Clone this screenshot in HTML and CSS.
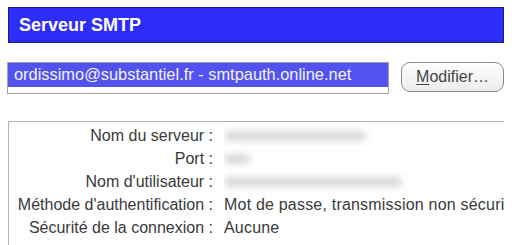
FILE: index.html
```html
<!DOCTYPE html>
<html lang="fr">
<head>
<meta charset="utf-8">
<link rel="stylesheet" href="styles.css">
</head>
<body>
<div class="page">
  <div class="header">Serveur SMTP</div>
  <div class="account-row">
    <div class="listbox">
      <div class="item selected">ordissimo@substantiel.fr - smtpauth.online.net</div>
    </div>
    <button class="btn"><u>M</u>odifier…</button>
  </div>
  <div class="details">
    <div class="grid">
      <div class="label">Nom du serveur :</div>
      <div class="value"><span class="blur b1"></span></div>
      <div class="label">Port :</div>
      <div class="value"><span class="blur b2"></span></div>
      <div class="label">Nom d'utilisateur :</div>
      <div class="value"><span class="blur b3"></span></div>
      <div class="label">Méthode d'authentification :</div>
      <div class="value">Mot de passe, transmission non sécurisée</div>
      <div class="label">Sécurité de la connexion :</div>
      <div class="value">Aucune</div>
    </div>
  </div>
</div>
</body>
</html>
```
FILE: styles.css
```css
html, body {
  margin: 0;
  padding: 0;
  background: #ffffff;
  width: 512px;
  height: 245px;
  overflow: hidden;
}
.page {
  font-family: "Liberation Sans", Arial, sans-serif;
  padding: 7px 8px 0 8px;
  display: flex;
  flex-direction: column;
}
.header {
  height: 34px;
  border: 1px solid #1c1c70;
  background: #2e2efa;
  color: #ffffff;
  font-weight: bold;
  font-size: 18px;
  display: flex;
  align-items: center;
  padding-left: 10px;
}
.account-row {
  display: flex;
  align-items: flex-start;
  margin-top: 19px;
  margin-left: -1px;
}
.listbox {
  width: 380px;
  height: 30px;
  border: 1px solid #9aa2b4;
  background: #ffffff;
  overflow: hidden;
}
.item {
  height: 24px;
  line-height: 23px;
  padding-left: 6px;
  font-size: 16.4px;
  color: #f4f4ff;
  white-space: nowrap;
}
.item.selected {
  background: #5252f0;
}
.btn {
  margin-left: 12px;
  width: 103px;
  height: 30px;
  border: 1px solid #8c8c8c;
  border-radius: 9px;
  background: linear-gradient(#ffffff, #ececec);
  font-family: "Liberation Sans", Arial, sans-serif;
  font-size: 16px;
  color: #444444;
  padding: 0;
}
.btn u {
  text-decoration-thickness: 1px;
  text-underline-offset: 2px;
}
.details {
  margin-top: 27px;
  border-top: 1px solid #b4b4b4;
  border-left: 1px solid #b4b4b4;
  height: 130px;
  overflow: hidden;
}
.grid {
  display: grid;
  grid-template-columns: 204px 1fr;
  column-gap: 11px;
  padding-top: 2px;
  font-size: 16px;
  color: #3a3a3a;
  line-height: 23px;
}
.label {
  text-align: right;
  white-space: nowrap;
}
.value {
  white-space: nowrap;
  overflow: hidden;
  display: flex;
  align-items: center;
  letter-spacing: 0.2px;
}
.blur {
  display: inline-block;
  height: 10px;
  background: #d8d8d8;
  filter: blur(3.5px);
  border-radius: 5px;
}
.b1 { width: 142px; }
.b2 { width: 26px; }
.b3 { width: 178px; }
```
